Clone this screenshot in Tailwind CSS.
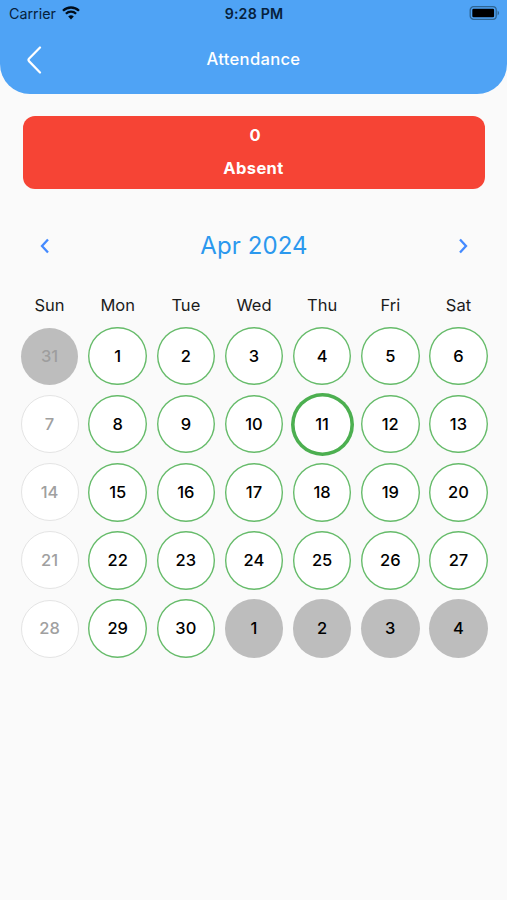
<!DOCTYPE html>
<html lang="en">
<head>
<meta charset="utf-8">
<meta name="viewport" content="width=device-width, initial-scale=1">
<title>Attendance</title>
<script src="https://cdn.jsdelivr.net/npm/@tailwindcss/browser@4"></script>
</head>
<body class="bg-[#fafafa] font-['Inter','Liberation_Sans',sans-serif] h-screen overflow-hidden text-black">
<header class="bg-[#4fa3f5] h-[94px] rounded-b-[30px]">
  <div class="grid grid-cols-3 items-center h-[27px] pl-[9px] pr-[7px] text-[#06213c]">
    <div class="flex items-center gap-[6px] text-[14.3px]">
      <span>Carrier</span>
      <svg width="18" height="14" viewBox="0 0 18 14" fill="none" stroke="#000d1a" stroke-width="2.3" class="-mt-px"><path d="M1 4.8a11.4 11.4 0 0 1 16 0M3.9 7.8a7.3 7.3 0 0 1 10.2 0"/><path d="M9 13.4 6.2 10.5a4 4 0 0 1 5.6 0Z" fill="#000d1a" stroke="none"/></svg>
    </div>
    <div class="text-center text-[14.2px] tracking-[0.2px] font-semibold whitespace-nowrap -ml-px">9:28 PM</div>
    <svg class="justify-self-end -mt-px" width="31" height="14" viewBox="0 0 31 14"><rect x="1.2" y=".7" width="26" height="12.6" rx="3.4" fill="none" stroke="#2e6593" stroke-width="1.3"/><rect x="3.3" y="2.7" width="21.8" height="8.6" rx="1.2"/><path d="M28.6 4.6q3 2.4 0 4.8Z" fill="#2e6593"/></svg>
  </div>
  <div class="grid grid-cols-3 items-center h-[65px] px-[27px]">
    <svg width="15" height="28" viewBox="0 0 15 28" fill="none" stroke="#fff" stroke-width="2.2" stroke-linecap="round" stroke-linejoin="round"><path d="M13 1.5 2.2 12.6q-1.4 1.4 0 2.8L13 26.5"/></svg>
    <h1 class="text-center text-[16.6px] font-medium text-white tracking-[0.3px]">Attendance</h1>
  </div>
</header>
<main>
  <section class="mt-[22px] ml-[23px] mr-[22px] h-[73px] rounded-[12px] bg-[#f64435] text-white font-bold text-[16.5px] leading-[33px] text-center pt-[3px] pl-[2px]">
    <p>0</p>
    <p class="-ml-[3px] tracking-[0.4px]">Absent</p>
  </section>
  <div class="mt-[37px] h-[40px] flex items-center justify-between pl-[39px] pr-[38px]">
    <svg width="11" height="16" viewBox="0 0 11 16" fill="none" stroke="#448aff" stroke-width="2.3"><path d="M9 1.5 3 8l6 6.5"/></svg>
    <h2 class="text-[24px] text-[#2b98ee] tracking-[0.1px]">Apr 2024</h2>
    <svg width="11" height="16" viewBox="0 0 11 16" fill="none" stroke="#448aff" stroke-width="2.3"><path d="m2 1.5 6 6.5-6 6.5"/></svg>
  </div>
  <div class="mt-[29px] ml-[15.5px] mr-[14.5px] grid grid-cols-7 text-center text-[16.5px] leading-[20px] h-[27px] text-[#1c1c1c]">
    <span>Sun</span><span>Mon</span><span>Tue</span><span>Wed</span><span>Thu</span><span>Fri</span><span>Sat</span>
  </div>
  <div id="days" class="ml-[15.5px] mr-[14.5px] grid grid-cols-7 auto-rows-[68.15px] place-items-center text-[16.5px] font-medium"></div>
</main>
<script>
const base = 'flex items-center justify-center rounded-full shrink-0 ';
const styles = {
  outside: 'size-[57px] bg-[#bdbdbd] text-[#9e9e9e]',
  sunday: 'size-[58px] bg-white border border-[#e4e4e4] text-[#a0a0a0]',
  next: 'size-[58.5px] bg-[#bdbdbd]',
  present: 'size-[58.5px] bg-white inset-ring-[1.4px] inset-ring-[#66bb6a]',
  today: 'size-[63px] bg-white inset-ring-[3.6px] inset-ring-[#4caf50]'
};
const days = [31, ...Array.from({length: 30}, (_, i) => i + 1), 1, 2, 3, 4];
document.getElementById('days').innerHTML = days.map((d, i) => {
  const kind = i === 0 ? 'outside' : i > 30 ? 'next' : i % 7 === 0 ? 'sunday' : d === 11 ? 'today' : 'present';
  return `<div class="${base}${styles[kind]}">${d}</div>`;
}).join('');
</script>
</body>
</html>
